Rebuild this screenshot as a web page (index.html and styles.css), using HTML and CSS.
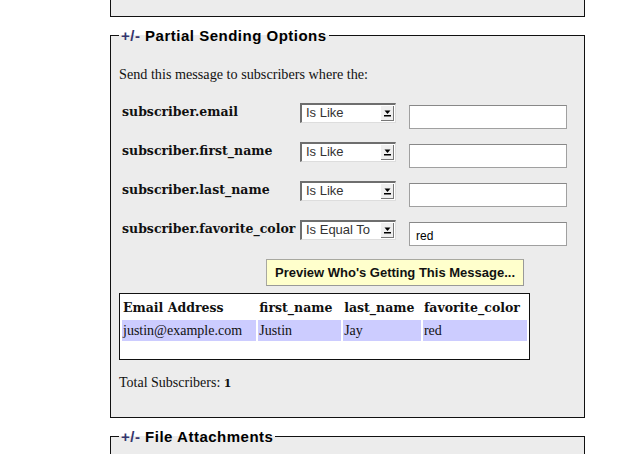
FILE: index.html
```html
<!DOCTYPE html>
<html>
<head>
<meta charset="utf-8">
<link rel="stylesheet" href="styles.css">
</head>
<body>
<div class="page">
  <fieldset class="box box-prev"></fieldset>

  <fieldset class="box">
    <legend class="legend"><span class="toggle">+/-</span> Partial Sending Options</legend>
    <p class="intro">Send this message to subscribers where the:</p>
    <div class="criteria">
      <div class="label">subscriber.email</div>
      <div class="sel"><span class="sel-text">Is Like</span><span class="sel-btn"><svg width="9" height="8" viewBox="0 0 9 8"><path d="M1.5 1.5h6L4.5 5z" fill="#000"/><rect x="1" y="6" width="7" height="1.5" fill="#000"/></svg></span></div>
      <div class="field"><input class="txt" type="text" value=""></div>

      <div class="label">subscriber.first_name</div>
      <div class="sel"><span class="sel-text">Is Like</span><span class="sel-btn"><svg width="9" height="8" viewBox="0 0 9 8"><path d="M1.5 1.5h6L4.5 5z" fill="#000"/><rect x="1" y="6" width="7" height="1.5" fill="#000"/></svg></span></div>
      <div class="field"><input class="txt" type="text" value=""></div>

      <div class="label">subscriber.last_name</div>
      <div class="sel"><span class="sel-text">Is Like</span><span class="sel-btn"><svg width="9" height="8" viewBox="0 0 9 8"><path d="M1.5 1.5h6L4.5 5z" fill="#000"/><rect x="1" y="6" width="7" height="1.5" fill="#000"/></svg></span></div>
      <div class="field"><input class="txt" type="text" value=""></div>

      <div class="label">subscriber.favorite_color</div>
      <div class="sel"><span class="sel-text">Is Equal To</span><span class="sel-btn"><svg width="9" height="8" viewBox="0 0 9 8"><path d="M1.5 1.5h6L4.5 5z" fill="#000"/><rect x="1" y="6" width="7" height="1.5" fill="#000"/></svg></span></div>
      <div class="field"><input class="txt" type="text" value="red"></div>
    </div>

    <div class="btn-row"><button class="preview">Preview Who's Getting This Message...</button></div>

    <table class="results">
      <tr class="head">
        <th class="c1">Email Address</th><th class="c2">first_name</th><th class="c3">last_name</th><th class="c4">favorite_color</th>
      </tr>
      <tr class="row">
        <td>justin@example.com</td><td>Justin</td><td>Jay</td><td>red</td>
      </tr>
    </table>

    <p class="total">Total Subscribers: <b>1</b></p>
  </fieldset>

  <fieldset class="box box-next">
    <legend class="legend"><span class="toggle">+/-</span> File Attachments</legend>
  </fieldset>
</div>
</body>
</html>
```
FILE: styles.css
```css
html, body {
  margin: 0;
  padding: 0;
  background: #fff;
}
body {
  font-family: "Liberation Serif", "Times New Roman", serif;
  color: #111;
  overflow: hidden;
  height: 454px;
}
.page {
  margin-left: 110px;
  width: 475px;
}
.box {
  box-sizing: border-box;
  margin: 0;
  padding: 0 8px;
  border: 1px solid #111;
  background: #ececec;
  min-width: 0;
}
.box-prev {
  height: 30px;
  margin-top: -13px;
}
.box + .box {
  margin-top: 10px;
}
.box-next {
  height: 40px;
}
.legend {
  font-family: "Liberation Sans", Arial, sans-serif;
  font-weight: bold;
  font-size: 15px;
  padding: 0 2px;
  margin-left: 0;
  color: #000;
  letter-spacing: 0.5px;
}
.toggle {
  color: #35356e;
  letter-spacing: 0.5px;
}
.intro {
  font-size: 14.2px;
  margin: 22px 0 0;
  line-height: 16px;
}
.criteria {
  display: grid;
  grid-template-columns: 178px 109px 158px;
  grid-auto-rows: 39px;
  margin-top: 21px;
  margin-left: 3px;
}
.label {
  font-family: "DejaVu Serif", Georgia, serif;
  font-weight: bold;
  font-size: 12.5px;
  line-height: 16px;
  padding-top: 1px;
}
.sel {
  box-sizing: border-box;
  width: 96px;
  height: 20px;
  margin-top: 0;
  display: flex;
  align-items: stretch;
  background: #fff;
  border-top: 2px solid #6e6e6e;
  border-left: 2px solid #6e6e6e;
  border-right: 1px solid #ddd;
  border-bottom: 1px solid #ddd;
  font-family: "Liberation Sans", Arial, sans-serif;
  font-size: 13px;
  color: #333;
}
.sel-text {
  flex: 1;
  padding-left: 4px;
  line-height: 15px;
  white-space: nowrap;
}
.sel-btn {
  width: 13px;
  margin: 1px 1px 1px 0;
  box-sizing: border-box;
  border-right: 1px solid #777;
  border-bottom: 1px solid #777;
  background: #efefef;
  display: flex;
  align-items: center;
  justify-content: center;
}
.field {
  padding-top: 2px;
}
.txt {
  box-sizing: border-box;
  width: 158px;
  height: 24px;
  margin: 0;
  border: 1px solid #a0a0a0;
  border-top-color: #888;
  background: #fff;
  font-family: "Liberation Sans", Arial, sans-serif;
  font-size: 12px;
  padding: 4px 6px 0;
  color: #000;
}
.btn-row {
  display: flex;
  padding-left: 147px;
  margin-top: 0;
}
.preview {
  box-sizing: border-box;
  width: 258px;
  height: 27px;
  background: #ffffcc;
  border: 1px solid #a8a8a0;
  border-right-color: #999;
  border-bottom-color: #999;
  font-family: "Liberation Sans", Arial, sans-serif;
  font-weight: bold;
  font-size: 13px;
  color: #111;
  padding: 0;
}
.results {
  margin-top: 7px;
  margin-left: 0;
  width: 411px;
  table-layout: fixed;
  border: 1px solid #111;
  background: #fff;
  border-spacing: 2px;
  padding-bottom: 16px;
}
.results th, .results td {
  font-size: 14px;
  text-align: left;
  padding: 2px 0 2px 1px;
  line-height: 17px;
  white-space: nowrap;
}
.results th {
  font-family: "DejaVu Serif", Georgia, serif;
  font-weight: bold;
  font-size: 12.5px;
  padding: 3px 0 2px 1px;
}
.results .c1 { width: 132px; }
.results .c2 { width: 81px; }
.results .c3 { width: 76px; }
.results .c4 { width: 102px; }
.results .row td {
  background: #ccccff;
}
.total {
  font-size: 14px;
  margin: 15px 0 0;
  height: 42px;
  line-height: 16px;
}
.total b {
  font-family: "DejaVu Serif", Georgia, serif;
  font-size: 11px;
}
```
